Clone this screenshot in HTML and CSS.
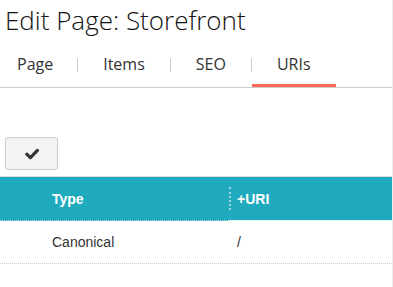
FILE: index.html
```html
<!DOCTYPE html>
<html>
<head>
    <title>Edit Page: Storefront</title>
    <link rel="stylesheet" href="styles.css">
</head>
<body>
    <div class="page">
        <h1>Edit Page: Storefront</h1>

        <!-- Tabs -->
        <nav class="tabs">
            <a class="tab" href="#">Page</a>
            <span class="tab-sep"></span>
            <a class="tab" href="#">Items</a>
            <span class="tab-sep"></span>
            <a class="tab" href="#">SEO</a>
            <span class="tab-sep"></span>
            <a class="tab active" href="#">URIs</a>
        </nav>

        <div class="toolbar">
            <button class="save-btn" type="button" title="Save">
                <svg width="14" height="12" viewBox="0 0 14 12">
                    <polyline points="1.8,6.2 5.4,9.6 12.4,2.4" fill="none" stroke="#333" stroke-width="3.2" stroke-linecap="round" stroke-linejoin="round"/>
                </svg>
            </button>
        </div>

        <!-- URI list -->
        <table class="uri-table">
            <thead>
                <tr>
                    <th class="col-type">Type</th>
                    <th class="col-uri"><span class="th-sep"></span>+URI</th>
                </tr>
            </thead>
            <tbody>
                <tr>
                    <td class="col-type">Canonical</td>
                    <td class="col-uri">/</td>
                </tr>
            </tbody>
        </table>
    </div>
</body>
</html>
```

FILE: styles.css
```css
/* Global CSS */
* {
    box-sizing: border-box;
}

body {
    margin: 0;
    padding: 0;
    background-color: #fff;
    font-family: "Open Sans", Lato, sans-serif;
    color: #222;
}

.page {
    width: 393px;
    height: 100vh;
    border-right: 1px solid #eee;
}

h1 {
    margin: 0;
    padding: 5px 0 0 5px;
    font-size: 26px;
    line-height: 30px;
    font-weight: 300;
    color: #111;
}

/* Tabs CSS */
.tabs {
    display: flex;
    align-items: flex-start;
    border-bottom: 1px solid #ccc;
}

.tab {
    padding: 19px 25px 10px;
    font-size: 16px;
    line-height: 20px;
    color: #333;
    text-decoration: none;
    border-bottom: 3px solid transparent;
}

.tab:first-child {
    padding-left: 17px;
    padding-right: 24px;
}

.tab.active {
    border-bottom-color: #f86a58;
}

.tab-sep {
    width: 1px;
    height: 14px;
    margin-top: 23px;
    background-color: #ccc;
}

/* Toolbar CSS */
.toolbar {
    padding: 49px 0 6px 5px;
}

.save-btn {
    display: flex;
    align-items: center;
    justify-content: center;
    width: 53px;
    height: 33px;
    padding: 0;
    background-color: #f4f4f4;
    border: 1px solid #ccc;
    border-radius: 3px;
    cursor: pointer;
}

/* Table CSS */
.uri-table {
    width: 392px;
    border-collapse: collapse;
    border-top: 1px solid #ddd;
    font-family: "Liberation Sans", Arial, sans-serif;
    font-size: 14px;
}

.uri-table th {
    height: 44px;
    padding: 0;
    background-color: #1faabd;
    color: #fff;
    font-weight: bold;
    text-align: left;
    border-bottom: 1px dotted #bfe6eb;
}

.uri-table td {
    height: 43px;
    padding: 0;
    color: #333;
    border-bottom: 1px dotted #ccc;
}

.col-type {
    width: 229px;
    padding-left: 52px !important;
}

.col-uri {
    position: relative;
    padding-left: 8px !important;
}

.th-sep {
    position: absolute;
    left: 0;
    top: 10px;
    height: 23px;
    border-left: 2px dotted #9fd8e0;
}
```
